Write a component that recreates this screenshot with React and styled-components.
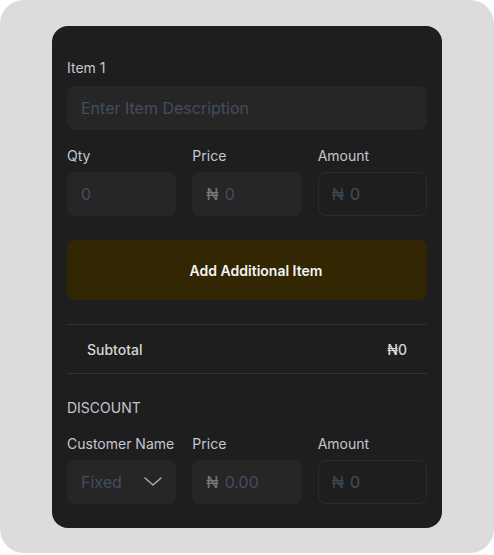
import React from 'react'
import styled, { createGlobalStyle } from 'styled-components'

const GlobalStyle = createGlobalStyle`
  html, body {
    margin: 0;
    padding: 0;
    background: #ffffff;
    font-family: Inter, "Noto Sans", sans-serif;
  }
  * { box-sizing: border-box; }
`

const S_Page = styled.main`
  width: 494px;
  height: 553px;
  padding: 26px 52px 25px;
  background-color: #dcdcdc;
  border-radius: 24px;
`

const S_Card = styled.section`
  height: 502px;
  padding: 33px 15px 0;
  display: flex;
  flex-direction: column;
  background-color: #1e1e1e;
  border-radius: 16px;
`

const S_Label = styled.label`
  display: block;
  margin-bottom: ${(p) => (p.$tight ? 7 : 9)}px;
  font-size: 14px;
  line-height: 18px;
  color: #c3c7d0;
  white-space: nowrap;
`

const S_Field = styled.div`
  height: 44px;
  padding: 0 13px;
  display: flex;
  align-items: center;
  gap: 6px;
  font-size: 16px;
  color: #444e5f;
  background-color: ${(p) => (p.$outlined ? 'transparent' : '#262626')};
  border: 1px solid ${(p) => (p.$outlined ? '#2b2b2b' : 'transparent')};
  border-radius: 8px;
`

const S_Naira = styled.span`
  color: ${(p) => (p.$dim ? '#3c4554' : '#737985')};
  font-size: 16px;
`

const S_Row = styled.div`
  margin-top: ${(p) => p.$top || 0}px;
  display: grid;
  grid-template-columns: repeat(3, 1fr);
  gap: 16px;
`

const S_Button = styled.button`
  margin-top: 24px;
  height: 60px;
  width: 100%;
  padding: 0 0 0 18px;
  border: none;
  border-radius: 8px;
  background-color: #332603;
  color: #f4f4f4;
  font-family: inherit;
  font-size: 14px;
  font-weight: 600;
  cursor: pointer;
`

const S_Subtotal = styled.div`
  margin-top: 24px;
  height: 50px;
  padding: 0 20px;
  display: flex;
  align-items: center;
  justify-content: space-between;
  border-top: 1px solid #333333;
  border-bottom: 1px solid #333333;
  font-size: 14px;
  font-weight: 500;
  color: #d6d6d6;
`

const S_Section = styled.div`
  margin-top: 25px;
  font-size: 14px;
  line-height: 18px;
  color: #c3c7d0;
`

const S_Select = styled(S_Field)`
  justify-content: space-between;
`

const Chevron = () => (
  <svg width="18" height="10" viewBox="0 0 18 10" fill="none">
    <path d="M1 1l8 7 8-7" stroke="#a4a9b4" strokeWidth="1.6" strokeLinecap="round" strokeLinejoin="round" />
  </svg>
)

export default function App() {
  return (
    <>
      <GlobalStyle />
      <S_Page>
        <S_Card>
          <div>
            <S_Label>Item 1</S_Label>
            <S_Field>Enter Item Description</S_Field>
          </div>

          <S_Row $top={17}>
            <div>
              <S_Label $tight>Qty</S_Label>
              <S_Field>0</S_Field>
            </div>
            <div>
              <S_Label $tight>Price</S_Label>
              <S_Field>
                <S_Naira>₦</S_Naira>0
              </S_Field>
            </div>
            <div>
              <S_Label $tight>Amount</S_Label>
              <S_Field $outlined>
                <S_Naira $dim>₦</S_Naira>0
              </S_Field>
            </div>
          </S_Row>

          <S_Button>Add Additional Item</S_Button>

          <S_Subtotal>
            <span>Subtotal</span>
            <span>₦0</span>
          </S_Subtotal>

          <S_Section>DISCOUNT</S_Section>

          <S_Row $top={18}>
            <div>
              <S_Label $tight>Customer Name</S_Label>
              <S_Select>
                <span>Fixed</span>
                <Chevron />
              </S_Select>
            </div>
            <div>
              <S_Label $tight>Price</S_Label>
              <S_Field>
                <S_Naira>₦</S_Naira>0.00
              </S_Field>
            </div>
            <div>
              <S_Label $tight>Amount</S_Label>
              <S_Field $outlined>
                <S_Naira $dim>₦</S_Naira>0
              </S_Field>
            </div>
          </S_Row>
        </S_Card>
      </S_Page>
    </>
  )
}
